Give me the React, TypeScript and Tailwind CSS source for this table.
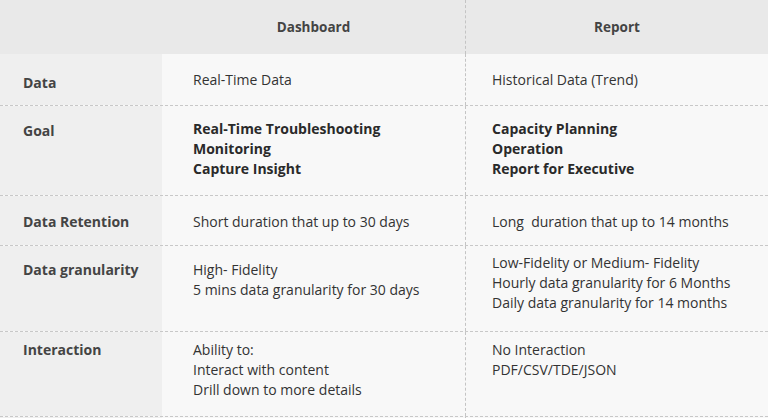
import React from 'react';

interface Row {
  label: string;
  height: string;
  labelPad: string;
  dashPad: string;
  reportPad: string;
  dashboard: string[];
  report: string[];
  bold?: boolean;
}

const rows: Row[] = [
  {
    label: 'Data',
    height: 'h-[52px]',
    labelPad: 'pt-[19px]',
    dashPad: 'pt-[16px]',
    reportPad: 'pt-[16px]',
    dashboard: ['Real-Time Data'],
    report: ['Historical Data (Trend)'],
  },
  {
    label: 'Goal',
    height: 'h-[90px]',
    labelPad: 'pt-[15px]',
    dashPad: 'pt-[13px]',
    reportPad: 'pt-[13px]',
    dashboard: ['Real-Time Troubleshooting', 'Monitoring', 'Capture Insight'],
    report: ['Capacity Planning', 'Operation', 'Report for Executive'],
    bold: true,
  },
  {
    label: 'Data Retention',
    height: 'h-[50px]',
    labelPad: 'pt-[16px]',
    dashPad: 'pt-[16px]',
    reportPad: 'pt-[16px]',
    dashboard: ['Short duration that up to 30 days'],
    report: ['Long\u00a0 duration that up to 14 months'],
  },
  {
    label: 'Data granularity',
    height: 'h-[86px]',
    labelPad: 'pt-[14px]',
    dashPad: 'pt-[14px]',
    reportPad: 'pt-[7px]',
    dashboard: ['High- Fidelity', '5 mins data granularity for 30 days'],
    report: ['Low-Fidelity or Medium- Fidelity', 'Hourly data granularity for 6 Months', 'Daily data granularity for 14 months'],
  },
  {
    label: 'Interaction',
    height: 'h-[85px]',
    labelPad: 'pt-[8px]',
    dashPad: 'pt-[8px]',
    reportPad: 'pt-[8px]',
    dashboard: ['Ability to:', 'Interact with content', 'Drill down to more details'],
    report: ['No Interaction', 'PDF/CSV/TDE/JSON'],
  },
];

const Lines = ({ lines, bold }: { lines: string[]; bold?: boolean }) => (
  <div className={`flex flex-col text-[14px] leading-[20px] ${bold ? 'font-bold text-[#2a2a2a]' : 'text-[#333333]'}`}>
    {lines.map(l => (
      <span key={l} className="whitespace-pre">{l}</span>
    ))}
  </div>
);

export default function App() {
  return (
    <div
      className="w-[768px] h-[418px] bg-[#f8f8f8] overflow-hidden"
      style={{ fontFamily: '"Open Sans", "Liberation Sans", sans-serif' }}
    >
      {/* Header */}
      <div className="flex h-[54px] bg-[#e9e9e9] text-[13.5px] font-bold text-[#444444]">
        <div className="w-[162px]" />
        <div className="w-[303px] flex items-center justify-center">Dashboard</div>
        <div className="flex-1 flex items-center justify-center border-l border-dashed border-[#c4c4c4]">Report</div>
      </div>

      {rows.map(row => (
        <div key={row.label} className={`flex ${row.height} border-b border-dashed border-[#c8c8c8]`}>
          <div className={`w-[162px] bg-[#efefef] pl-[23px] ${row.labelPad} text-[14px] leading-[20px] font-bold text-[#444444]`}>
            {row.label}
          </div>
          <div className={`w-[303px] pl-[31px] ${row.dashPad}`}>
            <Lines lines={row.dashboard} bold={row.bold} />
          </div>
          <div className={`flex-1 pl-[26px] ${row.reportPad} border-l border-dashed border-[#c4c4c4]`}>
            <Lines lines={row.report} bold={row.bold} />
          </div>
        </div>
      ))}

      <div className="flex h-[2px]">
        <div className="w-[162px] bg-[#efefef]" />
        <div className="w-[303px]" />
        <div className="flex-1 border-l border-dashed border-[#c4c4c4]" />
      </div>
    </div>
  );
}
